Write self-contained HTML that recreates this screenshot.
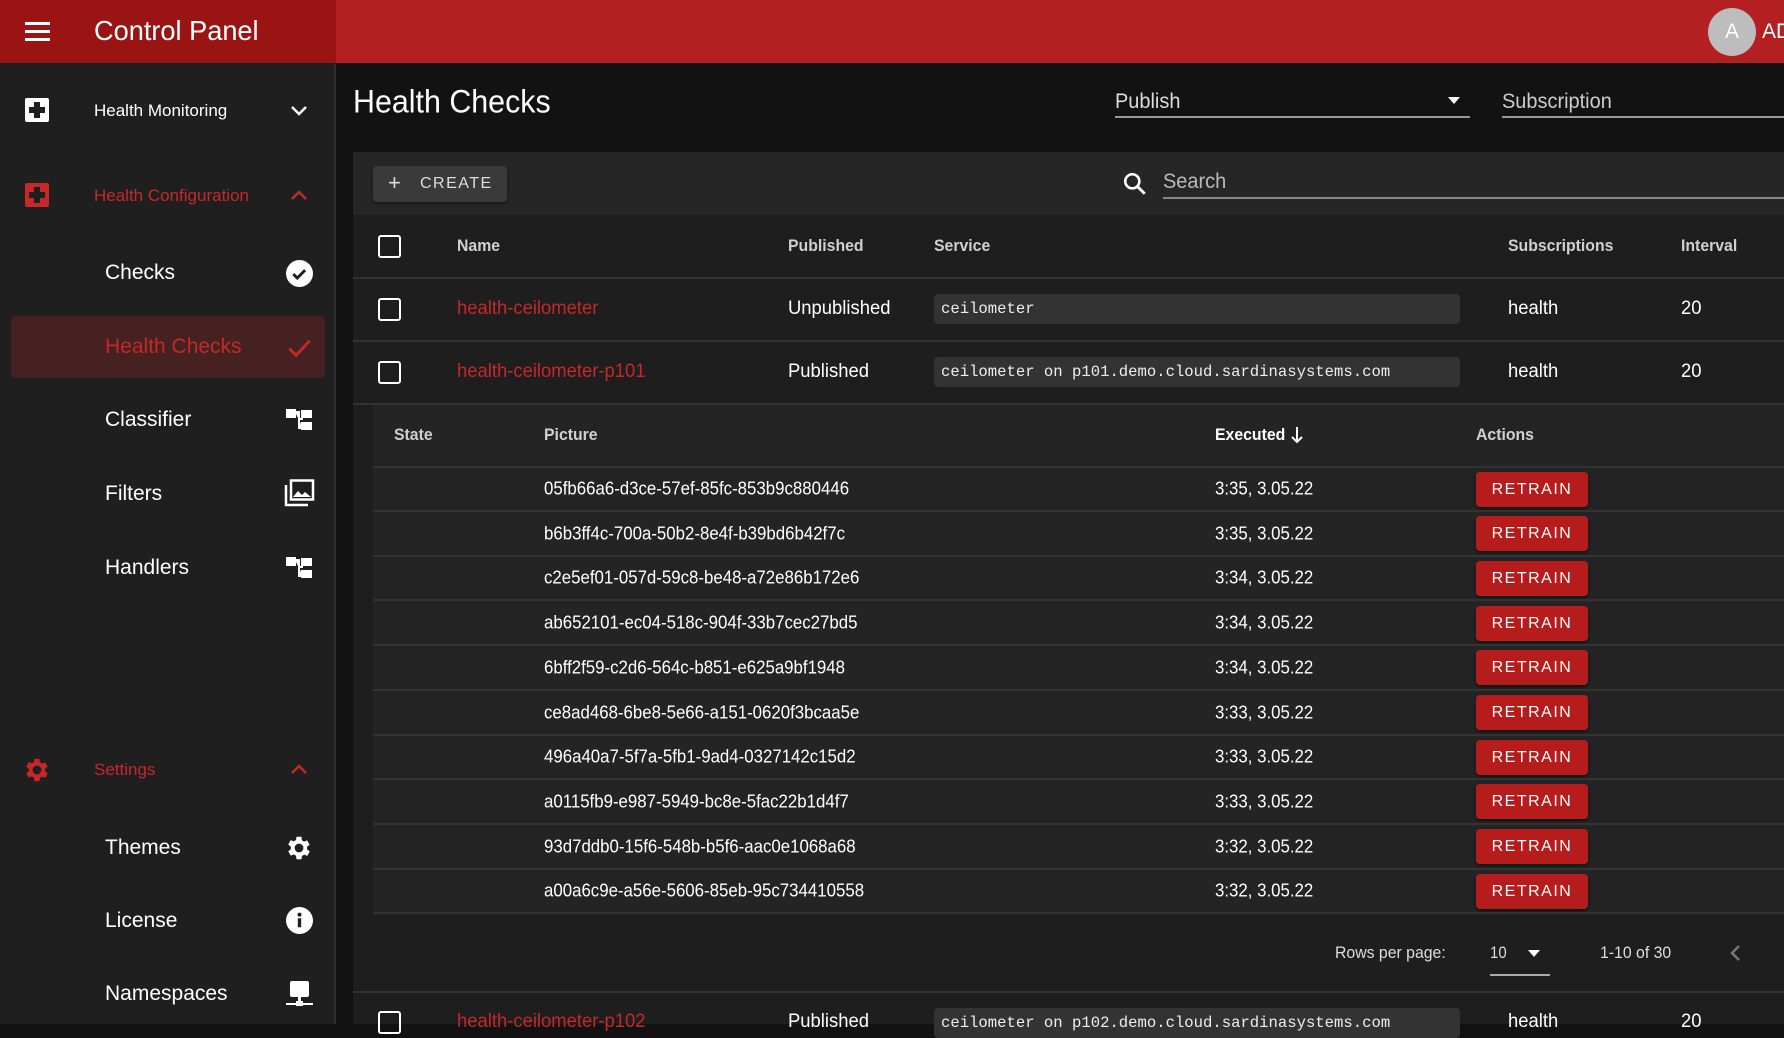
<!DOCTYPE html>
<html><head><meta charset="utf-8"><style>
*{margin:0;padding:0;box-sizing:border-box}
body{width:1784px;height:1024px;overflow:hidden;background:#121212;font-family:"Liberation Sans",sans-serif;color:#fff;position:relative}
.a{position:absolute}
.c{display:inline-block;transform:scaleX(.88);transform-origin:left center;white-space:nowrap}
.t{position:absolute;transform:translateY(-50%);white-space:nowrap}
.hd{font-weight:bold;color:#d0d0d0;font-size:17px}
.hd .c{transform:scaleX(.93)}
.cell{font-size:19px}
.cell .c{transform:scaleX(.97)}
.id .c{transform:scaleX(.935)}
.red{color:#c62828}
.cb{position:absolute;width:23px;height:23px;border:2.5px solid #fff;border-radius:3px}
.svc{position:absolute;left:934px;width:526px;height:30px;background:#333;border-radius:4px;font-family:"Liberation Mono",monospace;font-size:15.6px;line-height:30px;padding-left:7px;color:#eee}
.line{position:absolute;height:2px;background:#333}
.btn{position:absolute;left:1476px;width:112px;height:35px;background:#b71c1c;border-radius:4px;font-size:16px;letter-spacing:1.5px;text-align:center;line-height:35px;box-shadow:0 2px 3px rgba(0,0,0,.5)}
.side{font-size:21px}
</style></head><body>
<div class="a" style="left:0;top:0;width:1784px;height:63px;background:#b41f22"></div>
<div class="a" style="left:0;top:0;width:336px;height:63px;background:#9b1414"></div>
<div class="a" style="left:25px;top:22px;width:25px;height:3px;background:#fff"></div>
<div class="a" style="left:25px;top:30px;width:25px;height:3px;background:#fff"></div>
<div class="a" style="left:25px;top:38px;width:25px;height:3px;background:#fff"></div>
<div class="t" style="left:94px;top:31px;font-size:28px"><span class="c" style="transform:scaleX(.97)">Control Panel</span></div>
<div class="a" style="left:1708px;top:8px;width:48px;height:48px;border-radius:50%;background:#bdbdbd;color:#fff;font-size:21px;text-align:center;line-height:48px">A</div>
<div class="t" style="left:1762px;top:32px;font-size:21px">AD</div>

<div class="a" style="left:0;top:63px;width:336px;height:961px;background:#1f1f1f;border-right:2px solid #2e2e2e"></div>
<svg class="a" style="left:25px;top:98px" width="24" height="24" viewBox="0 0 24 24"><rect width="24" height="24" rx="2" fill="#fff"/><path d="M9 4h6v5h5v6h-5v5H9v-5H4V9h5z" fill="#1f1f1f"/></svg>
<div class="t" style="left:94px;top:111px;font-size:17px">Health Monitoring</div>
<svg class="a" style="left:290px;top:103px" width="18" height="14" viewBox="0 0 18 14"><path d="M2 4l7 7 7-7" stroke="#fff" stroke-width="2.5" fill="none"/></svg>
<svg class="a" style="left:25px;top:183px" width="24" height="24" viewBox="0 0 24 24"><rect width="24" height="24" rx="2" fill="#c62828"/><path d="M9 4h6v5h5v6h-5v5H9v-5H4V9h5z" fill="#1f1f1f"/></svg>
<div class="t red" style="left:94px;top:196px;font-size:17px">Health Configuration</div>
<svg class="a" style="left:290px;top:188px" width="18" height="14" viewBox="0 0 18 14"><path d="M2 11l7-7 7 7" stroke="#c62828" stroke-width="2.5" fill="none"/></svg>
<div class="t side" style="left:105px;top:273px">Checks</div>
<svg class="a" style="left:286px;top:260px" width="27" height="27" viewBox="0 0 24 24"><circle cx="12" cy="12" r="12" fill="#fff"/><path d="M6.5 12.5l3.5 3.5 7-7" stroke="#1f1f1f" stroke-width="2.6" fill="none"/></svg>
<div class="a" style="left:11px;top:316px;width:314px;height:62px;background:#452121;border-radius:4px"></div>
<div class="t side red" style="left:105px;top:347px">Health Checks</div>
<svg class="a" style="left:286px;top:334px" width="27" height="27" viewBox="0 0 24 24"><path d="M3 13l6 6L21 6" stroke="#c62828" stroke-width="2.6" fill="none"/></svg>
<div class="t side" style="left:105px;top:420px">Classifier</div>
<svg class="a" style="left:286px;top:408px" width="28" height="24" viewBox="0 0 28 24"><path d="M0 2h9v7H0zM9 4h4v16h4M13 11h4" fill="#fff" stroke="#fff" stroke-width="2"/><rect x="15" y="2" width="11" height="8" fill="#fff"/><rect x="15" y="14" width="11" height="8" fill="#fff"/></svg>
<div class="t side" style="left:105px;top:494px">Filters</div>
<svg class="a" style="left:284px;top:479px" width="31" height="28" viewBox="0 0 31 28"><path d="M2 6v20h22" stroke="#fff" stroke-width="2.5" fill="none"/><rect x="7" y="1.5" width="22" height="19" stroke="#fff" stroke-width="2.5" fill="none"/><path d="M9 18l5-6 4 4 3-3 6 5z" fill="#fff"/></svg>
<div class="t side" style="left:105px;top:568px">Handlers</div>
<svg class="a" style="left:286px;top:556px" width="28" height="24" viewBox="0 0 28 24"><path d="M0 2h9v7H0zM9 4h4v16h4M13 11h4" fill="#fff" stroke="#fff" stroke-width="2"/><rect x="15" y="2" width="11" height="8" fill="#fff"/><rect x="15" y="14" width="11" height="8" fill="#fff"/></svg>
<svg class="a" style="left:22px;top:755px" width="30" height="30" viewBox="0 0 24 24"><path fill="#c62828" d="M19.4 13a7.5 7.5 0 0 0 0-2l2.1-1.6-2-3.5-2.5 1a7 7 0 0 0-1.7-1L15 3h-4l-.4 2.7a7 7 0 0 0-1.7 1l-2.5-1-2 3.5L6.5 11a7.5 7.5 0 0 0 0 2l-2.1 1.6 2 3.5 2.5-1a7 7 0 0 0 1.7 1L11 21h4l.4-2.7a7 7 0 0 0 1.7-1l2.5 1 2-3.5zM13 15.5a3.5 3.5 0 1 1 0-7 3.5 3.5 0 0 1 0 7z" transform="translate(-1 0)"/></svg>
<div class="t red" style="left:94px;top:770px;font-size:17px">Settings</div>
<svg class="a" style="left:290px;top:762px" width="18" height="14" viewBox="0 0 18 14"><path d="M2 11l7-7 7 7" stroke="#c62828" stroke-width="2.5" fill="none"/></svg>
<div class="t side" style="left:105px;top:848px">Themes</div>
<svg class="a" style="left:284px;top:833px" width="30" height="30" viewBox="0 0 24 24"><path fill="#fff" d="M19.4 13a7.5 7.5 0 0 0 0-2l2.1-1.6-2-3.5-2.5 1a7 7 0 0 0-1.7-1L15 3h-4l-.4 2.7a7 7 0 0 0-1.7 1l-2.5-1-2 3.5L6.5 11a7.5 7.5 0 0 0 0 2l-2.1 1.6 2 3.5 2.5-1a7 7 0 0 0 1.7 1L11 21h4l.4-2.7a7 7 0 0 0 1.7-1l2.5 1 2-3.5zM13 15.5a3.5 3.5 0 1 1 0-7 3.5 3.5 0 0 1 0 7z" transform="translate(-1 0)"/></svg>
<div class="t side" style="left:105px;top:921px">License</div>
<svg class="a" style="left:286px;top:907px" width="27" height="27" viewBox="0 0 24 24"><circle cx="12" cy="12" r="12" fill="#fff"/><rect x="10.5" y="10" width="3" height="8" fill="#1f1f1f"/><circle cx="12" cy="6.8" r="1.8" fill="#1f1f1f"/></svg>
<div class="t side" style="left:105px;top:994px">Namespaces</div>
<svg class="a" style="left:286px;top:980px" width="27" height="28" viewBox="0 0 27 28"><rect x="4" y="1" width="19" height="16" rx="2" fill="#fff"/><rect x="12" y="17" width="3" height="6" fill="#fff"/><rect x="0" y="23" width="27" height="2" fill="#fff"/><rect x="10" y="21" width="7" height="5" fill="#fff"/></svg>

<div class="t" style="left:353px;top:102px;font-size:32px"><span class="c" style="transform:scaleX(.95)">Health Checks</span></div>
<div class="t" style="left:1115px;top:102px;font-size:21px;color:#ddd"><span class="c" style="transform:scaleX(.95)">Publish</span></div>
<svg class="a" style="left:1447px;top:96px" width="14" height="9" viewBox="0 0 14 9"><path d="M1 1h12L7 8z" fill="#fff"/></svg>
<div class="a" style="left:1115px;top:116px;width:355px;height:2px;background:#999"></div>
<div class="t" style="left:1502px;top:102px;font-size:21px;color:#ccc"><span class="c" style="transform:scaleX(.95)">Subscription</span></div>
<div class="a" style="left:1502px;top:116px;width:282px;height:2px;background:#999"></div>

<div class="a" style="left:353px;top:152px;width:1431px;height:872px;background:#1e1e1e"></div>
<div class="a" style="left:353px;top:152px;width:1431px;height:63px;background:#262626"></div>
<div class="a" style="left:373px;top:166px;width:134px;height:36px;background:#3a3a3a;border-radius:4px;box-shadow:0 2px 3px rgba(0,0,0,.4)"></div>
<div class="t" style="left:388px;top:183px;font-size:22px;color:#ddd">+</div>
<div class="t" style="left:420px;top:184px;font-size:16px;letter-spacing:1.5px;color:#ddd">CREATE</div>
<svg class="a" style="left:1122px;top:171px" width="26" height="26" viewBox="0 0 24 24"><circle cx="9.5" cy="9.5" r="6.5" stroke="#fff" stroke-width="2.4" fill="none"/><path d="M14.5 14.5l6.5 6.5" stroke="#fff" stroke-width="2.6"/></svg>
<div class="t" style="left:1163px;top:182px;font-size:21px;color:#bbb"><span class="c" style="transform:scaleX(.95)">Search</span></div>
<div class="a" style="left:1163px;top:197px;width:621px;height:2px;background:#888"></div>

<div class="cb" style="left:378px;top:235px"></div>
<div class="t hd" style="left:457px;top:246px"><span class="c">Name</span></div>
<div class="t hd" style="left:788px;top:246px"><span class="c">Published</span></div>
<div class="t hd" style="left:934px;top:246px"><span class="c">Service</span></div>
<div class="t hd" style="left:1508px;top:246px"><span class="c">Subscriptions</span></div>
<div class="t hd" style="left:1681px;top:246px"><span class="c">Interval</span></div>
<div class="line" style="left:353px;top:277px;width:1431px"></div>
<div class="cb" style="left:378px;top:298px"></div>
<div class="t cell red" style="left:457px;top:309px"><span class="c">health-ceilometer</span></div>
<div class="t cell" style="left:788px;top:309px"><span class="c">Unpublished</span></div>
<div class="svc" style="top:294px">ceilometer</div>
<div class="t cell" style="left:1508px;top:309px"><span class="c">health</span></div>
<div class="t cell" style="left:1681px;top:309px"><span class="c">20</span></div>
<div class="line" style="left:353px;top:340px;width:1431px"></div>
<div class="cb" style="left:378px;top:361px"></div>
<div class="t cell red" style="left:457px;top:372px"><span class="c">health-ceilometer-p101</span></div>
<div class="t cell" style="left:788px;top:372px"><span class="c">Published</span></div>
<div class="svc" style="top:357px">ceilometer on p101.demo.cloud.sardinasystems.com</div>
<div class="t cell" style="left:1508px;top:372px"><span class="c">health</span></div>
<div class="t cell" style="left:1681px;top:372px"><span class="c">20</span></div>
<div class="line" style="left:353px;top:403px;width:1431px"></div>

<div class="a" style="left:373px;top:405px;width:1411px;height:510px;background:#242424"></div>
<div class="t hd" style="left:394px;top:435px"><span class="c">State</span></div>
<div class="t hd" style="left:544px;top:435px"><span class="c">Picture</span></div>
<div class="t hd" style="left:1215px;top:435px;color:#fff"><span class="c">Executed</span></div>
<svg class="a" style="left:1290px;top:425px" width="14" height="20" viewBox="0 0 14 20"><path d="M7 2v15M2 12l5 5 5-5" stroke="#fff" stroke-width="2" fill="none"/></svg>
<div class="t hd" style="left:1476px;top:435px"><span class="c">Actions</span></div>
<div class="line" style="left:373px;top:466px;width:1411px"></div>

<div id="rows"></div>
<script>
var d=[["05fb66a6-d3ce-57ef-85fc-853b9c880446","3:35, 3.05.22"],["b6b3ff4c-700a-50b2-8e4f-b39bd6b42f7c","3:35, 3.05.22"],["c2e5ef01-057d-59c8-be48-a72e86b172e6","3:34, 3.05.22"],["ab652101-ec04-518c-904f-33b7cec27bd5","3:34, 3.05.22"],["6bff2f59-c2d6-564c-b851-e625a9bf1948","3:34, 3.05.22"],["ce8ad468-6be8-5e66-a151-0620f3bcaa5e","3:33, 3.05.22"],["496a40a7-5f7a-5fb1-9ad4-0327142c15d2","3:33, 3.05.22"],["a0115fb9-e987-5949-bc8e-5fac22b1d4f7","3:33, 3.05.22"],["93d7ddb0-15f6-548b-b5f6-aac0e1068a68","3:32, 3.05.22"],["a00a6c9e-a56e-5606-85eb-95c734410558","3:32, 3.05.22"]];
var h="";for(var i=0;i<d.length;i++){var y=489+i*44.7;
h+='<div class="t id" style="left:544px;top:'+y+'px;font-size:18px"><span class="c">'+d[i][0]+'</span></div>';
h+='<div class="t id" style="left:1215px;top:'+y+'px;font-size:18px"><span class="c">'+d[i][1]+'</span></div>';
h+='<div class="btn" style="top:'+(y-17.5)+'px">RETRAIN</div>';
h+='<div class="line" style="left:373px;top:'+(y+21)+'px;width:1411px"></div>';}
document.getElementById("rows").outerHTML=h;
</script>

<div class="t" style="left:1335px;top:953px;font-size:17px;color:#ddd"><span class="c" style="transform:scaleX(.93)">Rows per page:</span></div>
<div class="t" style="left:1490px;top:953px;font-size:17px;color:#ddd"><span class="c">10</span></div>
<svg class="a" style="left:1527px;top:949px" width="14" height="9" viewBox="0 0 14 9"><path d="M1 1h12L7 8z" fill="#fff"/></svg>
<div class="a" style="left:1490px;top:974px;width:60px;height:2px;background:#aaa"></div>
<div class="t" style="left:1600px;top:953px;font-size:17px;color:#ddd"><span class="c" style="transform:scaleX(.93)">1-10 of 30</span></div>
<svg class="a" style="left:1729px;top:944px" width="12" height="18" viewBox="0 0 12 18"><path d="M10 2L3 9l7 7" stroke="#777" stroke-width="2.5" fill="none"/></svg>
<div class="line" style="left:353px;top:991px;width:1431px"></div>
<div class="cb" style="left:378px;top:1011px"></div>
<div class="t cell red" style="left:457px;top:1022px"><span class="c">health-ceilometer-p102</span></div>
<div class="t cell" style="left:788px;top:1022px"><span class="c">Published</span></div>
<div class="svc" style="top:1008px">ceilometer on p102.demo.cloud.sardinasystems.com</div>
<div class="t cell" style="left:1508px;top:1022px"><span class="c">health</span></div>
<div class="t cell" style="left:1681px;top:1022px"><span class="c">20</span></div>
</body></html>
